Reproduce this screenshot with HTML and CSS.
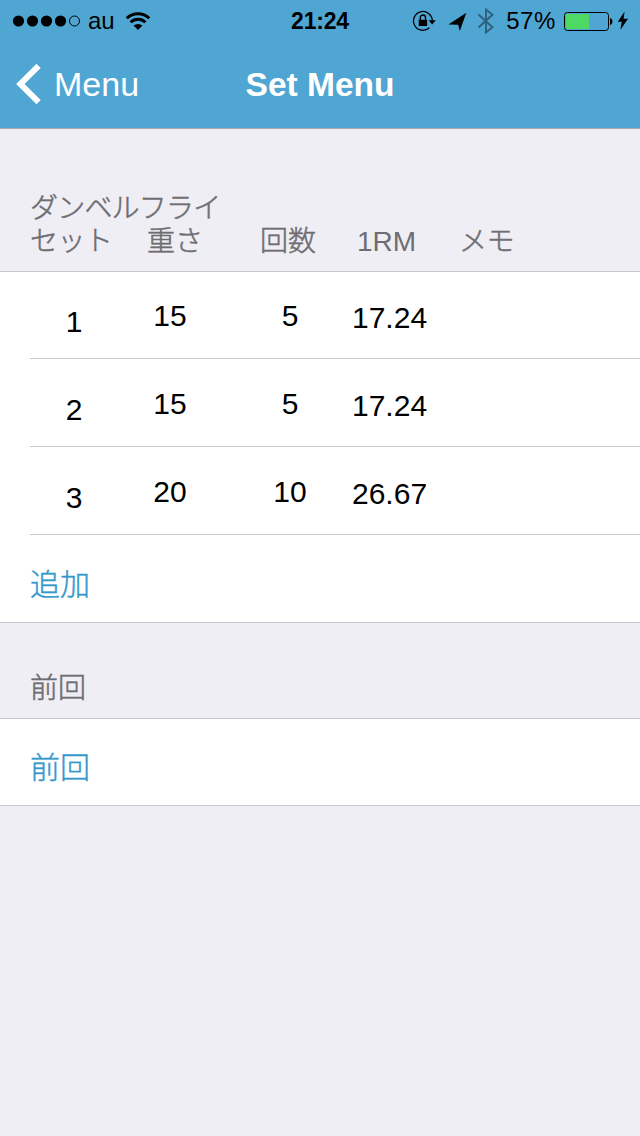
FILE: index.html
```html
<!DOCTYPE html>
<html lang="ja">
<head>
<meta charset="UTF-8">
<meta name="viewport" content="width=device-width, initial-scale=1.0">
<title>Set Menu</title>
<link rel="stylesheet" href="styles.css">
</head>
<body>

<header class="header">
  <div class="status-bar">
    <div class="status-left">
      <svg class="signal" width="70" height="14" viewBox="0 0 70 14">
        <circle cx="6.5" cy="7" r="5.6"/>
        <circle cx="20.5" cy="7" r="5.6"/>
        <circle cx="34.5" cy="7" r="5.6"/>
        <circle cx="48.5" cy="7" r="5.6"/>
        <circle cx="62.5" cy="7" r="5" fill="none" stroke="#000"/>
      </svg>
      <span class="carrier">au</span>
      <svg class="wifi" width="26" height="20" viewBox="0 0 26 20">
        <path d="M1.8 7.2a16 16 0 0 1 22.4 0M5.6 11.2a10.6 10.6 0 0 1 14.8 0" fill="none" stroke="#000" stroke-width="3"/>
        <path d="M8.6 14.6a6.5 6.5 0 0 1 8.8 0L13 19z"/>
      </svg>
    </div>
    <span class="clock">21:24</span>
    <div class="status-right">
      <svg class="lock" width="24" height="22" viewBox="0 0 24 22">
        <path d="M17.4 17.7a9.4 9.4 0 1 1 2.9-6.9" fill="none" stroke="#000" stroke-width="1.3"/>
        <path d="M16.6 10.2h7.2l-3.6 4.2zM6.7 9.8h8.4v6.2H6.7z"/>
        <path d="M8.3 10V7.6a2.6 2.6 0 0 1 5.2 0V10" fill="none" stroke="#000" stroke-width="1.4"/>
      </svg>
      <svg class="location" width="20" height="20" viewBox="0 0 20 20">
        <path d="M18.3 1.8 11.8 20 10.2 13.8.4 13.4z"/>
      </svg>
      <svg class="bluetooth" width="18" height="28" viewBox="0 0 18 28">
        <path d="M1.5 7.5 15.4 20.3 9 25.5V2.5L15.4 7.7 1.5 20.5" fill="none" stroke="#2e627e" stroke-width="2"/>
      </svg>
      <span class="percent">57%</span>
      <svg class="battery" width="50" height="20" viewBox="0 0 50 20">
        <rect x="0.5" y="1.5" width="44" height="18" rx="3" fill="none" stroke="#000"/>
        <rect x="2" y="3" width="23" height="15" rx="1" fill="#4cd964"/>
        <path d="M46 7c3.3 1 3.3 6 0 7z"/>
      </svg>
      <svg class="bolt" width="12" height="20" viewBox="0 0 12 20">
        <path d="M7.6 .5.8 10.8h4L3.3 19 11 7.8H6.6z"/>
      </svg>
    </div>
  </div>
  <nav class="nav-bar">
    <a class="back">
      <svg width="26" height="42" viewBox="0 0 26 42">
        <path d="M22.6 2.8 4.4 21l18.2 18.2" fill="none" stroke="#fff" stroke-width="6"/>
      </svg>
      <span>Menu</span>
    </a>
    <h1>Set Menu</h1>
  </nav>
</header>

<main>
  <div class="section-header">
    <div class="exercise">ダンベルフライ</div>
    <div class="columns">
      <span class="kana">セット</span>
      <span>重さ</span>
      <span>回数</span>
      <span class="latin">1RM</span>
      <span class="kana">メモ</span>
    </div>
  </div>
  <div class="table">
    <div class="row set">
      <span class="no">1</span><span class="weight">15</span><span class="reps">5</span><span class="rm">17.24</span>
    </div>
    <div class="row set">
      <span class="no">2</span><span class="weight">15</span><span class="reps">5</span><span class="rm">17.24</span>
    </div>
    <div class="row set">
      <span class="no">3</span><span class="weight">20</span><span class="reps">10</span><span class="rm">26.67</span>
    </div>
    <div class="row link">追加</div>
  </div>

  <div class="section-header small">前回</div>
  <div class="table">
    <div class="row link">前回</div>
  </div>
</main>

</body>
</html>
```

FILE: styles.css
```css
body {
  margin: 0;
  background-color: #efeef4;
  font-family: "Liberation Sans", "Noto Sans CJK JP", sans-serif;
  color: #000;
}

svg {
  display: block;
  flex: none;
}

.header {
  height: 128px;
  background-color: #50a6d3;
  border-bottom: 1px solid #a9a9ad;
}

.status-bar {
  display: grid;
  grid-template-columns: 1fr auto 1fr;
  height: 40px;
  line-height: 42px;
  font-size: 24px;
}

.status-left,
.status-right {
  display: flex;
  align-items: center;
}

.status-left {
  padding-left: 12px;
}

.carrier {
  margin: 0 10px 0 6px;
}

.clock {
  font-weight: bold;
  font-size: 23px;
  letter-spacing: -0.2px;
}

.status-right {
  justify-content: flex-end;
  padding-right: 11px;
}

.location {
  margin: 0 9px 0 12px;
}

.percent {
  margin: 0 8px 0 11px;
  letter-spacing: 0.6px;
}

.bolt {
  margin-left: 3px;
}

.nav-bar {
  display: grid;
  grid-template-columns: 1fr auto 1fr;
  align-items: center;
  height: 88px;
  font-size: 34px;
  color: #fff;
}

.back {
  display: flex;
  align-items: center;
  gap: 12px;
  padding-left: 16px;
}

.nav-bar h1 {
  margin: 0;
  padding-top: 2px;
  font-size: 33.5px;
}

.section-header {
  box-sizing: border-box;
  height: 142px;
  padding: 63px 0 0 30px;
  font-size: 28px;
  font-weight: 300;
  line-height: 33px;
  color: #6d6d72;
  -webkit-text-stroke: 0.5px #6d6d72;
}

.section-header.small {
  height: 95px;
  padding-top: 49px;
}

.exercise {
  letter-spacing: -0.8px;
}

.kana {
  letter-spacing: -0.6px;
}

.latin {
  -webkit-text-stroke: 0;
}

.columns {
  display: grid;
  grid-template-columns: 117px 113px 97px 102px 1fr;
}

.table {
  background-color: #fff;
  box-shadow: inset 0 1px #c8c7cc, inset 0 -1px #c8c7cc;
}

.row {
  box-sizing: border-box;
  height: 88px;
  margin-left: 30px;
  border-bottom: 1px solid #c8c7cc;
  font-size: 30px;
  line-height: 88px;
}

.row:last-child {
  border-bottom: none;
}

.set {
  display: grid;
  grid-template-columns: 74px 118px 122px 1fr;
  padding-left: 7px;
}

.no,
.weight,
.reps {
  text-align: center;
}

.no {
  padding-top: 7px;
}

.weight,
.reps {
  padding-top: 1px;
}

.rm {
  padding: 3px 0 0 1px;
}

.link {
  padding-top: 6px;
  font-weight: 300;
  color: #3498cb;
  -webkit-text-stroke: 0.4px #3498cb;
}
```
